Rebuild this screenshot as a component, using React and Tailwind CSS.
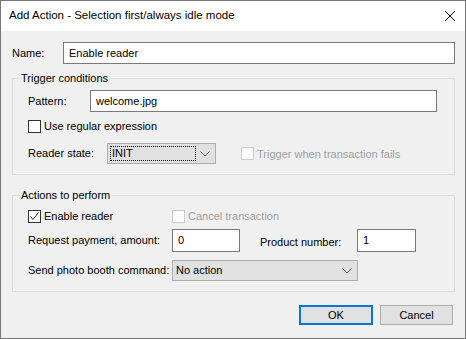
import React from 'react';

const Check = ({ checked, disabled, label, className = '' }) => (
  <div className={`flex items-center ${className}`}>
    <div
      className={`w-[13px] h-[13px] border flex items-center justify-center ${
        disabled ? 'border-[#cccccc] bg-[#fcfcfc]' : 'border-[#333333] bg-white'
      }`}
    >
      {checked && (
        <svg width="11" height="11" viewBox="0 0 11 11">
          <polyline points="1.5,5.5 4,8.5 9.5,1.5" fill="none" stroke="#333" strokeWidth="1" />
        </svg>
      )}
    </div>
    <span className={`ml-[3px] leading-[14px] ${disabled ? 'text-[#a0a0a0]' : 'text-black'}`}>{label}</span>
  </div>
);

const Chevron = () => (
  <svg width="10" height="6" viewBox="0 0 10 6" className="shrink-0">
    <polyline points="0.5,0.5 5,5 9.5,0.5" fill="none" stroke="#555" strokeWidth="1" />
  </svg>
);

const TextBox = ({ value, className = '' }) => (
  <div className={`border border-[#7a7a7a] bg-white flex items-center pl-[5px] ${className}`}>{value}</div>
);

const App = () => {
  return (
    <div className="w-[466px] h-[339px] border border-[#777777] bg-[#f0f0f0] flex flex-col text-[11px] text-black font-['Liberation_Sans',Arial,sans-serif]">

      {/* Title bar */}
      <div className="h-[30px] bg-white flex items-center pl-[8px] pr-[10px] shrink-0">
        <span className="flex-1 text-[11.5px]">Add Action - Selection first/always idle mode</span>
        <svg width="10" height="10" viewBox="0 0 10 10" className="mb-[1px]">
          <line x1="0" y1="0" x2="10" y2="10" stroke="#111" strokeWidth="1" />
          <line x1="10" y1="0" x2="0" y2="10" stroke="#111" strokeWidth="1" />
        </svg>
      </div>

      {/* Body */}
      <div className="flex-1 pl-[11px] pr-[10px] flex flex-col">

        {/* Name */}
        <div className="flex items-center mt-[11px]">
          <span className="w-[51px]">Name:</span>
          <TextBox value="Enable reader" className="flex-1 h-[22px]" />
        </div>

        {/* Trigger conditions */}
        <fieldset className="mt-[7px] border border-[#dcdcdc] pl-[15px] pb-[10px]">
          <legend className="-ml-[8px] px-[1px] leading-[14px]">Trigger conditions</legend>
          <div className="flex items-center mt-[5px]">
            <span className="w-[62px]">Pattern:</span>
            <TextBox value="welcome.jpg" className="w-[347px] h-[22px]" />
          </div>
          <Check label="Use regular expression" className="mt-[7px]" />
          <div className="flex items-center mt-[10px]">
            <span className="w-[79px]">Reader state:</span>
            <div className="w-[109px] h-[21px] border border-[#adadad] bg-[#e1e1e1] flex items-center pl-[2px] pr-[5px]">
              <div className="w-[86px] h-[15px] border border-dotted border-black flex items-center pl-[1px]">INIT</div>
              <div className="flex-1" />
              <Chevron />
            </div>
            <Check label="Trigger when transaction fails" disabled className="ml-[25px]" />
          </div>
        </fieldset>

        {/* Actions to perform */}
        <fieldset className="mt-[13px] border border-[#dcdcdc] pl-[15px] pb-[10px]">
          <legend className="-ml-[8px] px-[1px] leading-[14px]">Actions to perform</legend>
          <div className="flex items-center mt-[7px]">
            <Check label="Enable reader" checked className="w-[144px]" />
            <Check label="Cancel transaction" disabled />
          </div>
          <div className="flex items-center mt-[6px]">
            <span className="w-[144px]">Request payment, amount:</span>
            <TextBox value="0" className="w-[68px] h-[23px]" />
            <span className="ml-[20px] w-[97px] pt-[4px]">Product number:</span>
            <TextBox value="1" className="w-[59px] h-[23px]" />
          </div>
          <div className="flex items-center mt-[8px]">
            <span className="w-[144px]">Send photo booth command:</span>
            <div className="w-[186px] h-[21px] border border-[#adadad] bg-[#e1e1e1] flex items-center pl-[3px] pr-[5px]">
              <span className="flex-1">No action</span>
              <Chevron />
            </div>
          </div>
        </fieldset>

        {/* Buttons */}
        <div className="flex justify-end gap-[7px] mt-[13px] mr-[2px]">
          <button className="w-[74px] h-[20px] border-2 border-[#0078d7] bg-[#e1e1e1] leading-none">OK</button>
          <button className="w-[73px] h-[20px] border border-[#adadad] bg-[#e1e1e1] leading-none">Cancel</button>
        </div>
      </div>
    </div>
  );
};

export default App;
